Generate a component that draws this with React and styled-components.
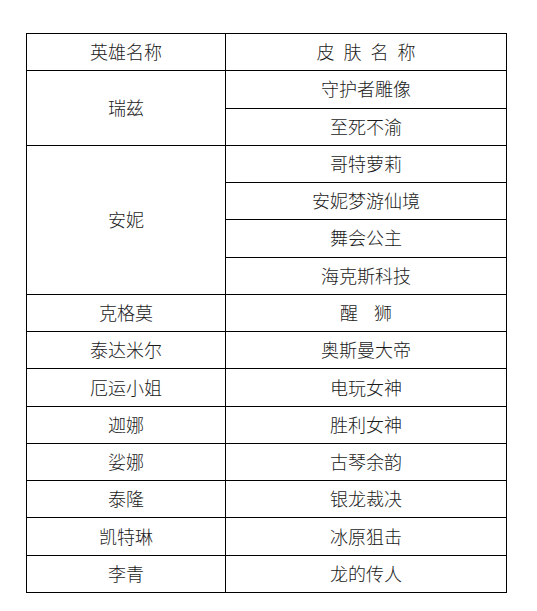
import React from 'react';
import styled, { createGlobalStyle } from 'styled-components';

const GlobalStyle = createGlobalStyle`
    html, body {
        margin: 0;
        padding: 0;
        background: #ffffff;
    }
`;

const Page = styled.div`
    padding: 33px 0 0 26px;
    font-family: "Noto Sans CJK SC", "Liberation Sans", sans-serif;
`;

const Table = styled.table`
    border-collapse: collapse;
    table-layout: fixed;
    width: 481px;
`;

const Row = styled.tr`
    height: 37.27px;
`;

const Cell = styled.td`
    border: 1px solid #000;
    padding: 0 0 2px 0;
    text-align: center;
    vertical-align: middle;
    font-size: 18px;
    font-weight: 300;
    line-height: 20px;
    color: #1a1a1a;
    width: ${(p) => p.$width || 'auto'};
`;

const heroes = [
    { name: '瑞兹', skins: ['守护者雕像', '至死不渝'] },
    { name: '安妮', skins: ['哥特萝莉', '安妮梦游仙境', '舞会公主', '海克斯科技'] },
    { name: '克格莫', skins: ['醒\u00a0\u00a0\u00a0\u00a0狮'] },
    { name: '泰达米尔', skins: ['奥斯曼大帝'] },
    { name: '厄运小姐', skins: ['电玩女神'] },
    { name: '迦娜', skins: ['胜利女神'] },
    { name: '娑娜', skins: ['古琴余韵'] },
    { name: '泰隆', skins: ['银龙裁决'] },
    { name: '凯特琳', skins: ['冰原狙击'] },
    { name: '李青', skins: ['龙的传人'] },
];

const App = () => {
    return (
        <Page>
            <GlobalStyle />
            <Table>
                <tbody>
                    <Row>
                        <Cell $width="198px">英雄名称</Cell>
                        <Cell>皮{'\u2002'}肤{'\u2002'}名{'\u2002'}称</Cell>
                    </Row>
                    {heroes.map((hero) =>
                        hero.skins.map((skin, i) => (
                            <Row key={hero.name + skin}>
                                {i === 0 && <Cell rowSpan={hero.skins.length}>{hero.name}</Cell>}
                                <Cell>{skin}</Cell>
                            </Row>
                        ))
                    )}
                </tbody>
            </Table>
        </Page>
    );
};

export default App;
